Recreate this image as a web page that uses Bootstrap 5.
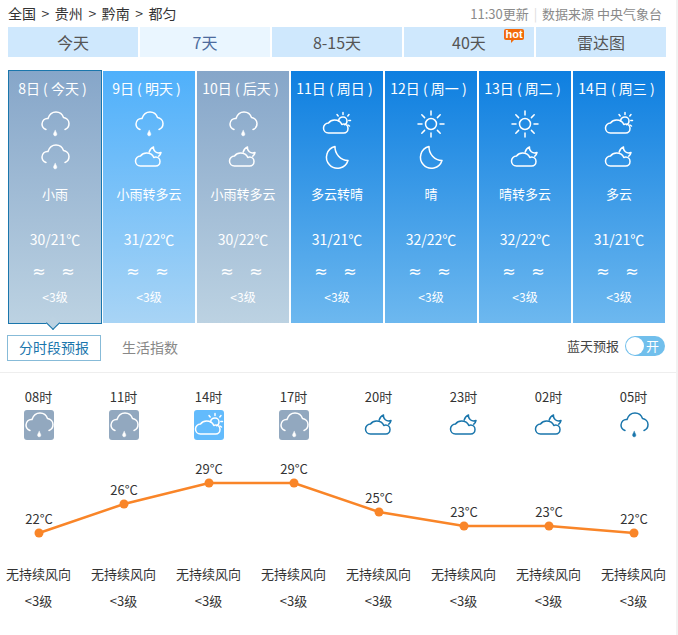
<!DOCTYPE html>
<html lang="zh-CN">

<head>
    <meta charset="UTF-8" />
    <title>都匀天气预报</title>
    <meta name="viewport" content="width=device-width, initial-scale=1" />
    <link href="https://cdn.jsdelivr.net/npm/bootstrap@5.3.3/dist/css/bootstrap.min.css" rel="stylesheet" />
    <style>
        html, body { height: 100%; overflow: hidden; }
        body { background: #fff; color: #333; font-family: "Noto Sans CJK SC", "Liberation Sans", sans-serif; font-size: 13px; }
        .wx-page { width: 678px; height: 635px; border-right: 2px solid #f2f2f2; }
        .wx-top { height: 27px; padding: 0 14px 0 8px; line-height: 27px; }
        .wx-crumb { font-size: 14px; word-spacing: 2.4px; color: #333; }
        .wx-source { color: #8a8a8a; }
        .wx-source i { font-style: normal; color: #ddd; margin: 0 2px; }
        .wx-tabs { margin: 0 0 13px 8px; gap: 2px; }
        .wx-tab { position: relative; width: 130px; height: 30px; line-height: 30px; background: #cfe8fd; color: #555; font-size: 16px; text-align: center; }
        .wx-tab.is-on { background: #eaf6ff; color: #4d6b9e; }
        .wx-hot { position: absolute; left: 100px; top: 2px; width: 20px; height: 11px; border-radius: 2px; background: #f26a0b; color: #fff; font: bold 11px/11px "Liberation Sans", sans-serif; }
        .wx-hot::after { content: ""; position: absolute; left: 7px; top: 11px; border-top: 3px solid #f26a0b; border-right: 3px solid transparent; }
        .wx-days { margin-left: 8px; gap: 2px; align-items: flex-start; }
        .wx-day { position: relative; width: 92px; height: 252px; margin-top: 1px; color: #fff; text-align: center; background: linear-gradient(#0e7fe0, #6db8ef); }
        .wx-day.is-sky { background: linear-gradient(#4fb0fb, #a8d4f5); }
        .wx-day.is-rain { background: linear-gradient(#86a6c9, #bcd2e2); }
        .wx-day.is-now { width: 94px; height: 254px; margin: 0 -1px 0 0; border: 1px solid #1a76ac; }
        .wx-day.is-now::after { content: ""; position: absolute; left: 38.7px; bottom: -5px; width: 10px; height: 10px; background: #bcd2e2; border: solid #1a76ac; border-width: 0 1px 1px 0; transform: rotate(45deg); }
        .wx-date { height: 38px; padding-right: 5px; line-height: 34px; font-size: 14px; }
        .wx-ico { display: block; width: 30px; height: 30px; margin: 0 auto 3px; fill: none; stroke: currentColor; stroke-width: 1.5; stroke-linecap: round; stroke-linejoin: round; }
        .wx-desc { margin-top: 7px; height: 30px; line-height: 30px; font-size: 13px; }
        .wx-temp { margin-top: 15px; height: 30px; line-height: 30px; font-size: 14px; }
        .wx-wave { margin-top: 6px; padding-right: 3px; height: 24px; line-height: 24px; font-family: "DejaVu Sans", sans-serif; font-size: 16px; gap: 15.6px; }
        .wx-wind { margin-top: 3px; height: 20px; line-height: 20px; font-size: 12px; }
        .wx-bar { height: 49px; padding: 11px 11px 0 7px; border-bottom: 1px solid #eee; }
        .wx-btn { width: 94px; height: 26px; line-height: 22px; border: 1px solid #87bbd8; color: #1a76ac; font-size: 14px; text-align: center; }
        .wx-link { margin-left: 21px; line-height: 24px; font-size: 14px; color: #888; }
        .wx-sky { margin-top: 1px; margin-right: 0; font-size: 13px; color: #444; line-height: 19px; gap: 6px; }
        .wx-switch { position: relative; width: 40px; height: 20px; border-radius: 10px; background: #71bfec; color: #fff; padding-left: 21px; line-height: 20px; font-size: 13px; }
        .wx-switch::before { content: ""; position: absolute; left: 1px; top: 1px; width: 18px; height: 18px; border-radius: 50%; background: #fff; }
        .wx-hours { margin: 0 -4px; width: 680px; }
        .wx-hour { width: 85px; text-align: center; }
        .wx-time { margin-top: 14px; height: 20px; line-height: 20px; }
        .wx-box { display: block; width: 30px; height: 30px; margin: 3px auto 0; border-radius: 3px; fill: none; stroke: currentColor; stroke-width: 1.5; stroke-linecap: round; stroke-linejoin: round; }
        .wx-box.is-rain { background: #92a8bf; color: #fff; }
        .wx-box.is-sun { background: #63bbfc; color: #fff; }
        .wx-box.is-night { color: #1a76ac; }
        .wx-chart { display: block; width: 678px; height: 114px; margin-top: 10px; }
        .wx-chart text { font-size: 13px; fill: #333; text-anchor: middle; }
        .wx-foot { line-height: 20px; }
        .wx-foot-b { margin-top: 7px; line-height: 20px; }
    </style>
</head>

<body>
    <svg width="0" height="0" class="position-absolute">
        <defs>
            <symbol id="i-rain" viewBox="0 0 30 30">
                <path d="M6 20.5C3.5 19.5 2 17.5 2 15C2 11.5 5 9 8 9.5C9.5 5 12.5 3 16 3C20 3 22.5 5.5 23.5 8.5C26.5 9 29 11.5 29 14.5C29 17 27.5 19.5 25 20.5" />
                <path d="M15.2 21.5C14.2 23.5 13.6 24 13.6 25.2C13.6 26.2 14.3 26.8 15.2 26.8C16.1 26.8 16.8 26.2 16.8 25.2C16.8 24 16.2 23.5 15.2 21.5Z" fill="currentColor" stroke-width=".5" />
            </symbol>
            <symbol id="i-cloud-sun" viewBox="0 0 30 30">
                <path d="M6.5 24C3.5 24 1.5 21.8 1.5 19C1.5 16.2 3.8 14 6.5 14C8 12 10.3 11 12.5 11C16 11 18.8 13 19.8 15.5C20.5 15.2 21 15 21.7 15C24.2 15 26 17 26 19.5C26 22 24.2 24 21.7 24Z" />
                <path d="M16.5 12C16.8 9.8 18.6 8 21 8C23.4 8 25 9.9 25 12C25 13.8 24 15.2 22.5 15.8" />
                <path d="M21 3.5V5.5M15 5.5L16.2 7M27 5.5L25.8 7M28.5 11.5H26.8M27.5 17L26 16" />
            </symbol>
            <symbol id="i-cloud-moon" viewBox="0 0 30 30">
                <path d="M6.5 24C3.5 24 1.5 21.8 1.5 19C1.5 16.2 3.8 14 6.5 14C8 12 10.3 11 12.5 11C16 11 18.8 13 19.8 15.5C20.5 15.2 21 15 21.7 15C24.2 15 26 17 26 19.5C26 22 24.2 24 21.7 24Z" />
                <path d="M19.5 5C18.8 8.8 22.5 12 27 10.5C26.6 12.2 25.8 13.4 24.8 14.2M19.5 5C17.4 6 15.8 7.6 15.2 10" />
            </symbol>
            <symbol id="i-moon" viewBox="0 0 30 30">
                <path d="M13 4.5A11 11 0 1 0 26 18.5A13.5 13.5 0 0 1 13 4.5Z" />
            </symbol>
            <symbol id="i-sun" viewBox="0 0 30 30">
                <circle cx="15" cy="15" r="5.5" />
                <path d="M15 2V6M15 24V28M2 15H6M24 15H28M5.8 5.8L8.6 8.6M21.4 21.4L24.2 24.2M5.8 24.2L8.6 21.4M21.4 8.6L24.2 5.8" />
            </symbol>
        </defs>
    </svg>

    <div class="wx-page">
        <div class="wx-top d-flex justify-content-between">
            <div class="wx-crumb">全国 &gt; 贵州 &gt; 黔南 &gt; 都匀</div>
            <div class="wx-source">11:30更新 <i>|</i> 数据来源 中央气象台</div>
        </div>

        <div class="wx-tabs d-flex">
            <div class="wx-tab">今天</div>
            <div class="wx-tab is-on">7天</div>
            <div class="wx-tab">8-15天</div>
            <div class="wx-tab">40天<span class="wx-hot">hot</span></div>
            <div class="wx-tab">雷达图</div>
        </div>

        <div class="wx-days d-flex" id="days"></div>

        <div class="wx-bar d-flex align-items-start">
            <div class="wx-btn">分时段预报</div>
            <div class="wx-link">生活指数</div>
            <div class="wx-sky d-flex ms-auto">蓝天预报<span class="wx-switch">开</span></div>
        </div>

        <div class="wx-hours d-flex" id="hours"></div>

        <svg class="wx-chart" id="chart" viewBox="0 0 678 114"></svg>

        <div class="wx-hours d-flex" id="foot"></div>
    </div>

    <script src="https://cdn.jsdelivr.net/npm/bootstrap@5.3.3/dist/js/bootstrap.bundle.min.js"></script>
    <script>
        const dias = [
            ['8日 ( 今天 )', 'rain', 'rain', '小雨', '30/21℃', 'is-rain is-now'],
            ['9日 ( 明天 )', 'rain', 'cloud-moon', '小雨转多云', '31/22℃', 'is-sky'],
            ['10日 ( 后天 )', 'rain', 'cloud-moon', '小雨转多云', '30/22℃', 'is-rain'],
            ['11日 ( 周日 )', 'cloud-sun', 'moon', '多云转晴', '31/21℃', ''],
            ['12日 ( 周一 )', 'sun', 'moon', '晴', '32/22℃', ''],
            ['13日 ( 周二 )', 'sun', 'cloud-moon', '晴转多云', '32/22℃', ''],
            ['14日 ( 周三 )', 'cloud-sun', 'cloud-moon', '多云', '31/21℃', '']
        ];

        const icono = (nombre, clase) => `<svg class="${clase}"><use href="#i-${nombre}"></use></svg>`;

        document.getElementById('days').innerHTML = dias.map(d => `
            <div class="wx-day ${d[5]}">
                <div class="wx-date">${d[0]}</div>
                ${icono(d[1], 'wx-ico')}${icono(d[2], 'wx-ico')}
                <div class="wx-desc">${d[3]}</div>
                <div class="wx-temp">${d[4]}</div>
                <div class="wx-wave d-flex justify-content-center"><span>≈</span><span>≈</span></div>
                <div class="wx-wind">&lt;3级</div>
            </div>`).join('');

        const horas = [
            ['08时', 'rain', 'is-rain', 22, 533],
            ['11时', 'rain', 'is-rain', 26, 504],
            ['14时', 'cloud-sun', 'is-sun', 29, 483],
            ['17时', 'rain', 'is-rain', 29, 483],
            ['20时', 'cloud-moon', 'is-night', 25, 512],
            ['23时', 'cloud-moon', 'is-night', 23, 526],
            ['02时', 'cloud-moon', 'is-night', 23, 526],
            ['05时', 'rain', 'is-night', 22, 533]
        ];

        document.getElementById('hours').innerHTML = horas.map(h => `
            <div class="wx-hour">
                <div class="wx-time">${h[0]}</div>
                ${icono(h[1], 'wx-box ' + h[2])}
            </div>`).join('');

        // la grafica empieza en y=450 de la pagina
        const puntos = horas.map((h, i) => ({ x: 39 + i * 85, y: h[4] - 450, t: h[3] }));
        document.getElementById('chart').innerHTML =
            `<polyline fill="none" stroke="#f98528" stroke-width="2.5" points="${puntos.map(p => p.x + ',' + p.y).join(' ')}"></polyline>` +
            puntos.map(p => `<circle cx="${p.x}" cy="${p.y}" r="4.5" fill="#f98528"></circle><text x="${p.x}" y="${p.y - 9}">${p.t}°C</text>`).join('');

        document.getElementById('foot').innerHTML = horas.map(() => `
            <div class="wx-hour">
                <div class="wx-foot">无持续风向</div>
                <div class="wx-foot-b">&lt;3级</div>
            </div>`).join('');
    </script>

</body>

</html>
